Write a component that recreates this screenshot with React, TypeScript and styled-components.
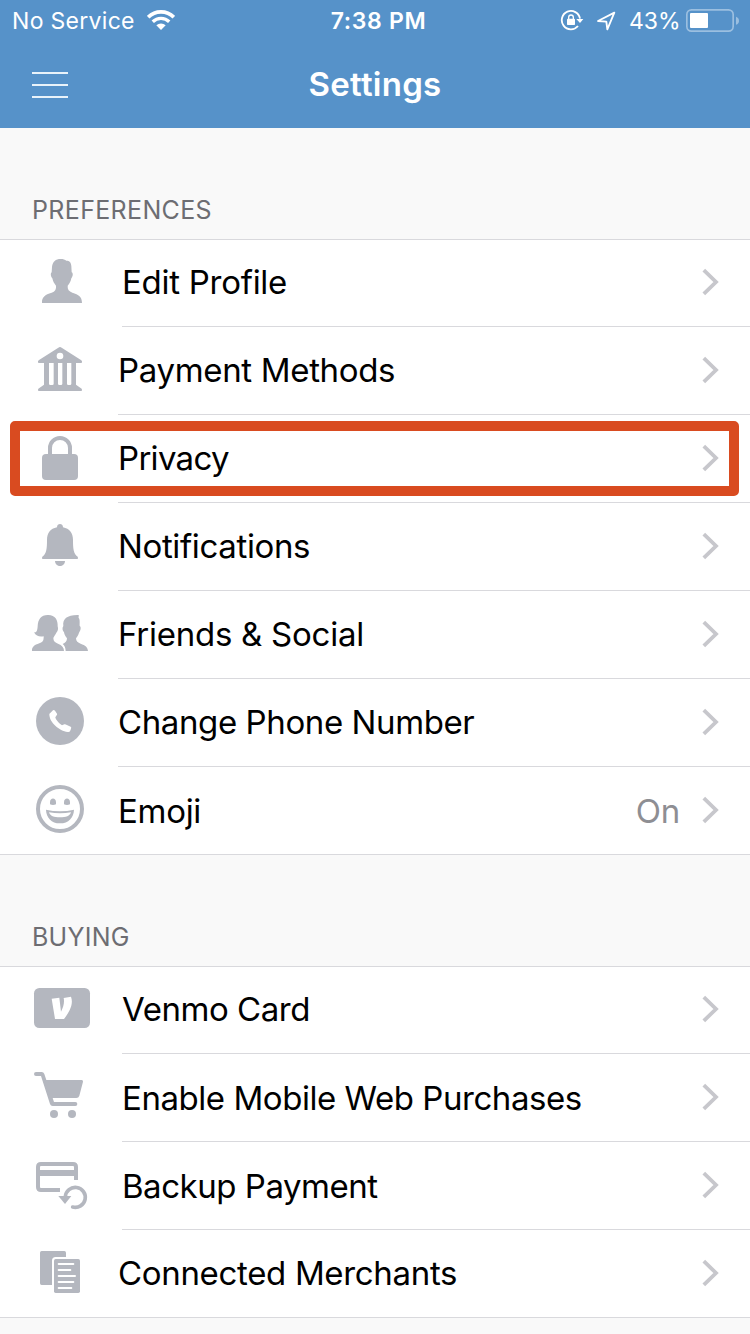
import React from "react";
import styled, { createGlobalStyle } from "styled-components";

const GlobalStyle = createGlobalStyle`
  *, *::before, *::after { box-sizing: border-box; }
  body {
    margin: 0;
    background: #f9f9f9;
    font-family: Inter, "Liberation Sans", sans-serif;
    -webkit-font-smoothing: antialiased;
  }
`;

const Screen = styled.main`
  width: 750px;
  height: 1334px;
  overflow: hidden;
  background: #f9f9f9;
`;

const TopBar = styled.header`
  height: 128px;
  background: #5692c9;
  color: #fff;
`;

const StatusBar = styled.div`
  display: grid;
  grid-template-columns: 1fr auto 1fr;
  height: 40px;
  padding: 0 11px 0 12px;
  font-size: 23px;
  line-height: 43px;
`;

const StatusGroup = styled.div<{ $end?: boolean }>`
  display: flex;
  justify-content: ${(p) => (p.$end ? "flex-end" : "flex-start")};
`;

const StatusIcon = styled.svg<{ $top: number; $gap?: number }>`
  display: block;
  flex: none;
  margin-top: ${(p) => p.$top}px;
  margin-right: ${(p) => p.$gap ?? 0}px;
`;

const Carrier = styled.span`
  width: 135px;
  letter-spacing: 0.3px;
  white-space: nowrap;
`;

const Clock = styled.span`
  padding-left: 6px;
  font-weight: 600;
  letter-spacing: 0.65px;
`;

const Percent = styled.span`
  width: 57px;
  letter-spacing: 0;
`;

const NavBar = styled.div`
  display: grid;
  grid-template-columns: 100px 1fr 100px;
  height: 88px;
`;

const MenuButton = styled.button`
  display: flex;
  flex-direction: column;
  gap: 10px;
  padding: 32px 0 0 32px;
  border: 0;
  background: none;
`;

const MenuLine = styled.span`
  width: 36px;
  height: 2px;
  background: #e9f3fa;
`;

const Title = styled.h1`
  margin: 0;
  font-size: 33px;
  font-weight: 600;
  line-height: 88px;
  letter-spacing: 0.25px;
  text-align: center;
`;

const SectionTitle = styled.h2<{ $spacing: number }>`
  height: 111px;
  margin: 0;
  padding: 67px 0 0 32px;
  color: #6d6d72;
  font-size: 25px;
  font-weight: 400;
  line-height: 30px;
  letter-spacing: ${(p) => p.$spacing}px;
`;

const List = styled.ul`
  margin: 0;
  padding: 0;
  list-style: none;
  background: #fff;
  border-top: 1px solid #d9d9dd;
  border-bottom: 1px solid #d9d9dd;
`;

const Row = styled.li<{ $inset: number }>`
  position: relative;
  display: grid;
  grid-template-columns: ${(p) => p.$inset}px 1fr;
  height: 88px;
  &:first-child, &:last-child { height: 87px; }
`;

const IconSlot = styled.div`
  padding: 12px 0 0 30px;
  svg { display: block; }
`;

const RowBody = styled.div`
  display: flex;
  align-items: flex-start;
  padding-right: 31px;
  border-bottom: 1px solid #d9d9dd;
  ${Row}:last-child & { border-bottom: 0; }
  > svg { flex: none; margin-top: 29px; }
  ${Row}:first-child & > svg { margin-top: 28px; }
`;

const Label = styled.span<{ $spacing: number; $top: number }>`
  flex: 1;
  padding-top: ${(p) => p.$top}px;
  color: #000;
  font-size: 33px;
  line-height: 40px;
  letter-spacing: ${(p) => p.$spacing}px;
  white-space: nowrap;
`;

const Value = styled.span`
  padding: 24px 21px 0 0;
  color: #8e8e93;
  font-size: 33px;
  line-height: 40px;
  letter-spacing: -0.3px;
`;

const Highlight = styled.div`
  position: absolute;
  top: 6px;
  left: 10px;
  right: 11px;
  height: 75px;
  border: 10px solid #d94b20;
  border-radius: 5px;
`;

const GREY = "#b4b7bf";

const Glyph = ({ y, children }: { y: number; children: React.ReactNode }) => (
  <svg width="62" height="62" viewBox={`90 ${y} 186 186`} fill={GREY}>
    {children}
  </svg>
);

const ProfileIcon = () => (
  <Glyph y={66}>
    <path d="M182 87c8 0 13 2 17 5 10 0 14 5 15 16l1 19c5 2 4 12-1 18-2 9-5 16-11 22-1 11 4 17 14 21 19 6 29 12 29 31H126c-1-18 9-25 29-31 10-4 14-9 13-21-6-7-9-13-11-22-5-5-6-16-2-18l1-16c2-16 11-24 26-24z" />
  </Glyph>
);

const BankIcon = () => (
  <Glyph y={327}>
    <path
      fillRule="evenodd"
      d="M175 353q5-4 10 0l59 38q4 4 1 8h-17v65l17 12q2 3 0 7H115q-2-4 0-7l17-12v-65h-17q-3-4 1-8zM180 368a10 10 0 1 0 0 20 10 10 0 0 0 0-20zM147 399v62q0 4 4 4h6q4 0 4-4v-62zM174 399v62q0 4 4 4h5q4 0 4-4v-62zM201 399v62q0 4 4 4h5q4 0 4-4v-62z"
    />
  </Glyph>
);

const LockIcon = () => (
  <Glyph y={36}>
    <rect x="126" y="117" width="108" height="78" rx="12" />
    <path d="M150 120V99a30 30 0 0 1 60 0v21" fill="none" stroke={GREY} strokeWidth="12" />
  </Glyph>
);

const BellIcon = () => (
  <Glyph y={300}>
    <path d="M171 337c0-13 18-13 18 0 20 4 30 17 30 38 0 24 1 41 14 50q3 7-3 7H130q-6 0-3-7c13-9 14-26 14-50 0-21 10-34 30-38z" />
    <path d="M165 438h30c-1 20-29 20-30 0z" />
  </Glyph>
);

const FriendsIcon = () => (
  <Glyph y={24}>
    <path d="M143 60c22-1 31 15 30 34 3 8 0 16-4 19-3 7-7 10-9 16 0 10 6 14 14 17 12 5 18 11 18 22H96c-1-12 7-18 22-23 8-3 13-7 13-17v-4c-12 2-23 0-29-12 7 2 10-3 11-18 1-21 10-34 30-34z" />
    <path d="M236 60c1 4-1 6 0 9 4 3 3 13 3 24 6 4 2 15-2 20-2 8-6 12-9 17 0 9 6 13 14 16 14 5 21 10 22 22h-67c-1-11-3-16-9-21 8-3 13-8 13-17-5-6-8-12-9-18-5-5-6-14-2-19-3-22 12-34 46-33z" />
  </Glyph>
);

const PhoneIcon = () => (
  <Glyph y={288}>
    <circle cx="180" cy="378" r="72" />
    <path
      fill="#fff"
      d="M150 355l9-9q3-2 6 1l6 9q1 3-1 5l-4 6c0 6 13 20 20 24l7-3q3-1 6 1l13 6q3 2 1 6l-3 8q-2 3-7 2c-25-3-55-28-55-53q0-2 2-3z"
    />
  </Glyph>
);

const SmileIcon = () => (
  <Glyph y={42}>
    <circle cx="180" cy="132" r="66" fill="none" stroke={GREY} strokeWidth="12" />
    <path d="M150 118v-6c0-15 18-15 18 0v6q-9 4-18 0zM192 118v-6c0-15 18-15 18 0v6q-9 4-18 0z" />
    <path
      fillRule="evenodd"
      d="M138 134q42 9 84 0c-1 24-16 41-42 41s-41-17-42-41zM147 142c3 11 15 15 33 15s30-4 33-15q-33 6-66 0z"
    />
  </Glyph>
);

const VenmoCardIcon = () => (
  <Glyph y={42}>
    <rect x="102" y="69" width="168" height="120" rx="16" />
    <path fill="#fff" d="M155 101l23-3 5 42c7-14 11-27 8-41l22-4c9 24-7 49-21 67h-27z" />
  </Glyph>
);

const CartIcon = () => (
  <Glyph y={303}>
    <path
      fillRule="evenodd"
      d="M108 321h17q6 0 8 6l6 18h106q5 0 4 5l-11 42q-2 7-9 7h-71l4 12h64q6 0 6 6t-6 6h-68q-6 0-8-6l-27-84h-15q-6 0-6-6t6-6z"
    />
    <circle cx="162" cy="447" r="12" />
    <circle cx="216" cy="447" r="12" />
  </Glyph>
);

const BackupIcon = () => (
  <Glyph y={27}>
    <path
      d="M228 105V66q0-9-9-9h-96q-9 0-9 9v60q0 9 9 9h57"
      fill="none"
      stroke={GREY}
      strokeWidth="12"
    />
    <rect x="114" y="75" width="114" height="18" />
    <path
      d="M196 155a30 30 0 1 1 22 31"
      fill="none"
      stroke={GREY}
      strokeWidth="11"
      strokeLinecap="round"
    />
    <path d="M175 153h39l-19 24z" />
  </Glyph>
);

const DocumentsIcon = () => (
  <Glyph y={291}>
    <path d="M125 318h68q5 0 5 5v13h-31q-11 0-11 11v73h-31q-5 0-5-5v-92q0-5 5-5z" />
    <rect x="162" y="342" width="78" height="102" rx="5" />
    <path
      d="M176 357h44M176 375h35M176 393h49M176 411h44M176 429h38"
      stroke="#fff"
      strokeWidth="6"
      strokeLinecap="round"
    />
  </Glyph>
);

const Chevron = () => (
  <svg width="18" height="28" viewBox="0 0 18 28" fill="none">
    <path d="M2.800 2.200l12.200 11.800-12.200 11.800" stroke="#c7c7cc" strokeWidth="3.8" />
  </svg>
);

const WifiIcon = () => (
  <StatusIcon width="28" height="20" viewBox="441 30 84 60" $top={10}>
    <g fill="none" stroke="#fff">
      <path d="M444.5 51.5a54.500 54.500 0 0 1 77 0" strokeWidth="11" />
      <path d="M458.300 65.300a35 35 0 0 1 49.400 0" strokeWidth="10" />
    </g>
    <path d="M483 90l-14-14a20 20 0 0 1 28 0z" fill="#fff" />
  </StatusIcon>
);

const RotationLockIcon = () => (
  <StatusIcon width="24" height="22" viewBox="60 27 72 66" $top={9} $gap={12}>
    <path d="M120 56a27.500 27.500 0 1 0-6 22" fill="none" stroke="#fff" strokeWidth="5.500" />
    <path d="M109 57h21l-10 12z" fill="#fff" />
    <rect x="81" y="56" width="24" height="19" rx="2" fill="#fff" />
    <path d="M86 58v-6a7 7 0 0 1 14 0v6" fill="none" stroke="#fff" strokeWidth="4" />
  </StatusIcon>
);

const LocationIcon = () => (
  <StatusIcon width="20" height="20" viewBox="169 33 60 60" $top={11} $gap={13}>
    <path
      d="M224 38l-49 25 25 2 3 23z"
      fill="none"
      stroke="#fff"
      strokeWidth="5.500"
      strokeLinejoin="round"
    />
  </StatusIcon>
);

const BatteryIcon = () => (
  <StatusIcon width="53" height="23" viewBox="438 27 159 69" $top={9}>
    <rect x="440.500" y="29.500" width="139" height="64" rx="14" fill="none" stroke="#9bbfe0" strokeWidth="5" />
    <rect x="450" y="39" width="54" height="45" rx="3" fill="#fff" />
    <path d="M588 50q9 3 9 12t-9 12z" fill="#9bbfe0" />
  </StatusIcon>
);

type Item = {
  label: string;
  icon: React.ComponentType;
  inset: number;
  spacing: number;
  top?: number;
  value?: string;
  highlighted?: boolean;
};

const preferences: Item[] = [
  { label: "Edit Profile", icon: ProfileIcon, inset: 122, spacing: -0.27, top: 22 },
  { label: "Payment Methods", icon: BankIcon, inset: 118, spacing: -0.33 },
  { label: "Privacy", icon: LockIcon, inset: 118, spacing: -0.7, highlighted: true },
  { label: "Notifications", icon: BellIcon, inset: 118, spacing: -0.36 },
  { label: "Friends & Social", icon: FriendsIcon, inset: 118, spacing: -0.25 },
  { label: "Change Phone Number", icon: PhoneIcon, inset: 118, spacing: -0.4 },
  { label: "Emoji", icon: SmileIcon, inset: 118, spacing: -0.3, top: 24, value: "On" },
];

const buying: Item[] = [
  { label: "Venmo Card", icon: VenmoCardIcon, inset: 122, spacing: -0.45, top: 22 },
  { label: "Enable Mobile Web Purchases", icon: CartIcon, inset: 122, spacing: -0.45, top: 24 },
  { label: "Backup Payment", icon: BackupIcon, inset: 122, spacing: -0.47, top: 24 },
  { label: "Connected Merchants", icon: DocumentsIcon, inset: 118, spacing: -0.33 },
];

const SettingsList = ({ items }: { items: Item[] }) => (
  <List>
    {items.map(({ label, icon: Icon, inset, spacing, top = 23, value, highlighted }) => (
      <Row key={label} $inset={inset}>
        <IconSlot>
          <Icon />
        </IconSlot>
        <RowBody>
          <Label $spacing={spacing} $top={top}>{label}</Label>
          {value && <Value>{value}</Value>}
          <Chevron />
        </RowBody>
        {highlighted && <Highlight />}
      </Row>
    ))}
  </List>
);

export default function App() {
  return (
    <Screen>
      <GlobalStyle />
      <TopBar>
        <StatusBar>
          <StatusGroup>
            <Carrier>No Service</Carrier>
            <WifiIcon />
          </StatusGroup>
          <Clock>7:38 PM</Clock>
          <StatusGroup $end>
            <RotationLockIcon />
            <LocationIcon />
            <Percent>43%</Percent>
            <BatteryIcon />
          </StatusGroup>
        </StatusBar>
        <NavBar>
          <MenuButton aria-label="Menu">
            <MenuLine />
            <MenuLine />
            <MenuLine />
          </MenuButton>
          <Title>Settings</Title>
        </NavBar>
      </TopBar>
      <SectionTitle $spacing={0.35}>PREFERENCES</SectionTitle>
      <SettingsList items={preferences} />
      <SectionTitle $spacing={0.25}>BUYING</SectionTitle>
      <SettingsList items={buying} />
    </Screen>
  );
}
